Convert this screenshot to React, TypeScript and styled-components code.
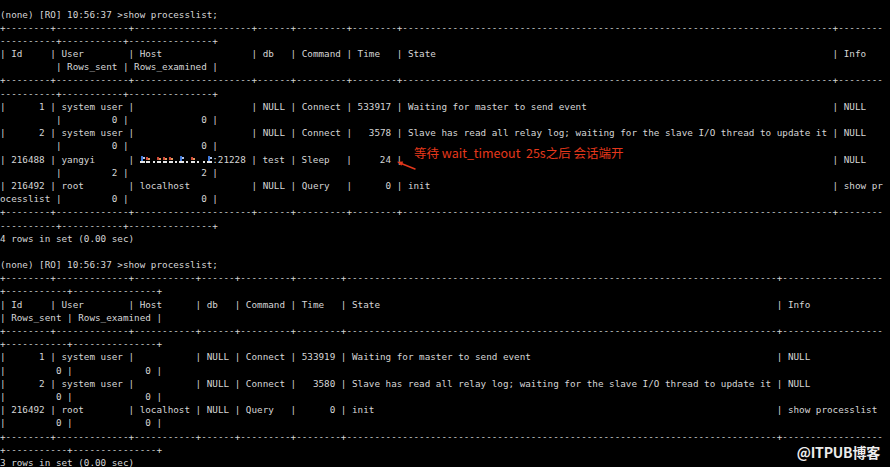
import React from 'react';
import styled, { createGlobalStyle, css } from 'styled-components';

const GlobalStyle = createGlobalStyle`
  html, body {
    margin: 0;
    padding: 0;
    background: #000;
  }
`;

const Terminal = styled.div`
  position: relative;
  width: 890px;
  height: 467px;
  overflow: hidden;
  box-sizing: border-box;
  padding: 7.5px 0 0 0;
  background: #000;
  color: #d6d6d6;
  font-family: 'DejaVu Sans Mono', 'Liberation Mono', monospace;
  font-size: 9.29px;
  line-height: 13.2px;
`;

const Line = styled.div`
  height: 13.2px;
  white-space: pre;
`;

type CellKind = 'L' | 'r' | '.';

const white = '#e6e6e6';
const block = (c: string) => `linear-gradient(${c}, ${c})`;

const MosaicCell = styled.span<{ $kind: CellKind }>`
  display: inline-block;
  width: 1ch;
  height: 9px;
  vertical-align: -1px;
  background-repeat: no-repeat;
  ${p =>
    p.$kind === 'L'
      ? css`
          background-image: ${block('#3f78d8')}, ${block(white)}, ${block('#b8c8e8')};
          background-size: 2px 5px, 5px 2px, 2px 2px;
          background-position: 1px 1px, 0 6px, 3px 2px;
        `
      : p.$kind === 'r'
      ? css`
          background-image: ${block('#cf4a3a')}, ${block(white)}, ${block('#e59a5c')};
          background-size: 2px 3px, 4px 2px, 2px 2px;
          background-position: 1px 2px, 1px 6px, 3px 3px;
        `
      : css`
          background-image: ${block(white)};
          background-size: 2px 2px;
          background-position: 2px 6px;
        `}
  filter: blur(0.3px);
`;

const Annotation = styled.div`
  position: absolute;
  left: 414px;
  top: 145px;
  color: #e5381c;
  font-family: 'Noto Sans CJK SC', 'Noto Sans', sans-serif;
  font-size: 12.5px;
  line-height: 16px;
  white-space: pre;
`;

const Arrow = styled.svg`
  position: absolute;
  left: 394px;
  top: 158px;
`;

const Watermark = styled.div`
  position: absolute;
  right: 10px;
  bottom: 6px;
  color: #ececec;
  font-family: 'Noto Sans CJK SC', 'Noto Sans', sans-serif;
  font-weight: 700;
  font-size: 14px;
  line-height: 18px;
  letter-spacing: -0.2px;
  text-shadow: 0 0 2px rgba(0, 0, 0, 0.6);
`;

const COLS = 158;
const IP_MASK = '§'.repeat(13);
const MOSAIC: CellKind[] = ['L', 'r', '.', 'r', 'r', 'r', '.', 'L', '.', 'r', '.', '.', 'L'];

const headers = ['Id', 'User', 'Host', 'db', 'Command', 'Time', 'State', 'Info', 'Rows_sent', 'Rows_examined'];
const rightAligned = [true, false, false, false, false, true, false, false, true, true];

const SLAVE = 'Slave has read all relay log; waiting for the slave I/O thread to update it';

const firstRows = [
  ['1', 'system user', '', 'NULL', 'Connect', '533917', 'Waiting for master to send event', 'NULL', '0', '0'],
  ['2', 'system user', '', 'NULL', 'Connect', '3578', SLAVE, 'NULL', '0', '0'],
  ['216488', 'yangyi', IP_MASK + ':21228', 'test', 'Sleep', '24', '', 'NULL', '2', '2'],
  ['216492', 'root', 'localhost', 'NULL', 'Query', '0', 'init', 'show processlist', '0', '0'],
];

const secondRows = [
  ['1', 'system user', '', 'NULL', 'Connect', '533919', 'Waiting for master to send event', 'NULL', '0', '0'],
  ['2', 'system user', '', 'NULL', 'Connect', '3580', SLAVE, 'NULL', '0', '0'],
  ['216492', 'root', 'localhost', 'NULL', 'Query', '0', 'init', 'show processlist', '0', '0'],
];

const wrap = (text: string) => {
  const out: string[] = [];
  for (let i = 0; i < text.length; i += COLS) out.push(text.slice(i, i + COLS));
  return out;
};

// mysql client style table, then wrapped like the terminal does
const renderTable = (rows: string[][]) => {
  const widths = headers.map((h, i) => Math.max(h.length, ...rows.map(r => r[i].length)));
  const sep = '+' + widths.map(w => '-'.repeat(w + 2)).join('+') + '+';
  const line = (cells: string[], header: boolean) =>
    '| ' +
    cells
      .map((c, i) => (rightAligned[i] && !header ? c.padStart(widths[i]) : c.padEnd(widths[i])))
      .join(' | ') +
    ' |';
  return [
    ...wrap(sep),
    ...wrap(line(headers, true)),
    ...wrap(sep),
    ...rows.flatMap(r => wrap(line(r, false))),
    ...wrap(sep),
  ];
};

const prompt = '(none) [RO] 10:56:37 >show processlist;';

const lines = [
  prompt,
  ...renderTable(firstRows),
  '4 rows in set (0.00 sec)',
  '',
  prompt,
  ...renderTable(secondRows),
  '3 rows in set (0.00 sec)',
];

const TermLine: React.FC<{ text: string }> = ({ text }) => (
  <Line>
    {text.split(/(§+)/).map((part, i) =>
      part.startsWith('§') ? (
        <React.Fragment key={i}>
          {MOSAIC.slice(0, part.length).map((k, j) => (
            <MosaicCell key={j} $kind={k} />
          ))}
        </React.Fragment>
      ) : (
        part
      )
    )}
  </Line>
);

const App: React.FC = () => (
  <>
    <GlobalStyle />
    <Terminal>
      {lines.map((l, i) => (
        <TermLine key={i} text={l} />
      ))}
      <Annotation>{'等待 wait_timeout  25s之后 会话端开'}</Annotation>
      <Arrow width="24" height="16" viewBox="0 0 24 16">
        <line x1="21" y1="11" x2="6" y2="5" stroke="#e5381c" strokeWidth="1.4" strokeLinecap="round" />
        <path d="M3 3.8 L9.2 3.4 L7.4 7.8 Z" fill="#e5381c" />
      </Arrow>
      <Watermark>@ITPUB博客</Watermark>
    </Terminal>
  </>
);

export default App;
